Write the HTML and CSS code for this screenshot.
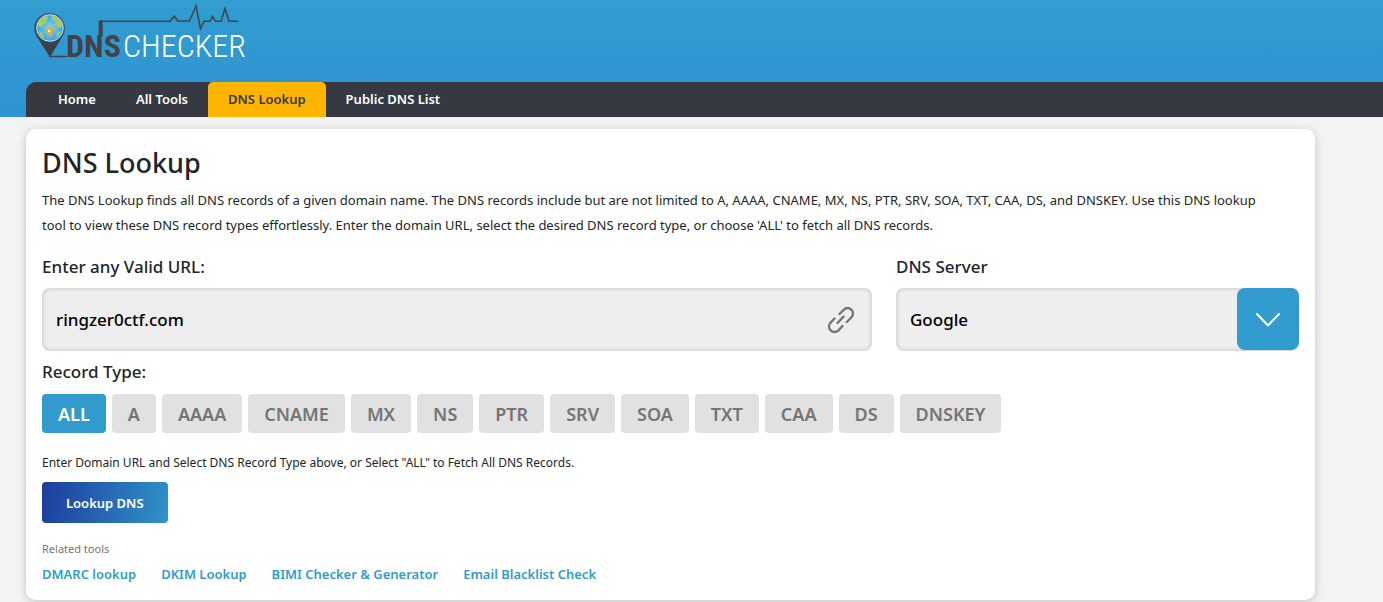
FILE: index.html
```html
<!DOCTYPE html>
<html lang="en">
<head>
<meta charset="utf-8">
<title>DNS Lookup</title>
<link rel="stylesheet" href="styles.css">
</head>
<body>
<header class="site-header">
  <a class="logo" href="#" aria-label="DNS Checker">
    <svg width="220" height="76" viewBox="0 0 220 76">
      <defs>
        <linearGradient id="pin" x1="0" y1="0" x2="0" y2="1">
          <stop offset="0" stop-color="#3c5f7d"/>
          <stop offset="1" stop-color="#34383e"/>
        </linearGradient>
        <radialGradient id="sea">
          <stop offset="0" stop-color="#7fd4ee"/>
          <stop offset="1" stop-color="#37a3dc"/>
        </radialGradient>
      </defs>
      <path d="M15.500 13C7 13 .200 19.500 .200 28c0 4 1.500 7 4 11L16 57l11-18c3-4.500 4-7 4-11C31 19.500 24 13 15.500 13Z" fill="url(#pin)"/>
      <path d="M15 56.500h18" stroke="#414347" stroke-width="1.500" fill="none"/>
      <circle cx="16" cy="28" r="13.300" fill="url(#sea)" stroke="#c5e2ec" stroke-width="1"/>
      <path d="M4 25c0-4 4-8 9-9.500l1 3-2 2 1 2-4 2-2 3-2-1ZM18 16c5 0 9 4 10.500 9l-2 3-3-1-3-2 1-3-4-3ZM5 31l3 1 2 5-1 1c-2-2-4-4-4-7ZM24 32l3-1-3 6-2-1Z" fill="#a7ca64"/>
      <path d="m12 28 3-1 4 1 1 3-2 2-1 4-2-1-1-4-3-2Z" fill="#eda82d"/>
      <circle cx="15" cy="31" r="1.200" fill="#fff"/>
      <path d="M66.500 36V21.300H136l4.500-5.300 3 5h12L162 6l4.500 22.500L170 21.300h6l2.500-5 3 5h5.500L191 8.500l4 12.800h9" fill="none" stroke="#42464b" stroke-width="1.600"/>
      <path d="M64.700 36V20.500h4V36Z" fill="#414347"/>
      <text class="logo-dns" x="32" y="57">DNS</text>
      <text class="logo-checker" x="89" y="57">CHECKER</text>
    </svg>
  </a>
  <nav class="nav">
    <a href="#">Home</a>
    <a href="#">All Tools</a>
    <a class="active" href="#">DNS Lookup</a>
    <a href="#">Public DNS List</a>
  </nav>
</header>
<main class="page">
  <form class="card">
    <h1>DNS Lookup</h1>
    <p class="intro">The DNS Lookup finds all DNS records of a given domain name. The DNS records include but are not limited to A, AAAA, CNAME, MX, NS, PTR, SRV, SOA, TXT, CAA, DS, and DNSKEY. Use this DNS lookup tool to view these DNS record types effortlessly. Enter the domain URL, select the desired DNS record type, or choose 'ALL' to fetch all DNS records.</p>
    <div class="fields">
      <div class="field field-url">
        <label for="url">Enter any Valid URL:</label>
        <div class="box">
          <input id="url" type="text" value="ringzer0ctf.com">
          <svg class="link-icon" width="28" height="28" viewBox="0 0 28 28" fill="none" stroke="#757575" stroke-width="2.400" stroke-linecap="round">
            <path d="M12.500 8l4-4c2.500-2.500 5.500-2.500 7.800-.300s2.200 5.500 0 7.800l-4.500 4.500M7.500 12.500l-3.800 4c-2.200 2.300-2.200 5.500 0 7.800s5.500 2.200 7.800 0l4-4.300M10.500 17l6-6.300"/>
          </svg>
        </div>
      </div>
      <div class="field field-server">
        <label for="server">DNS Server</label>
        <div class="box">
          <select id="server"><option>Google</option></select>
          <span class="arrow"><svg width="26" height="16" viewBox="0 0 26 16" fill="none" stroke="#fff" stroke-width="2" stroke-linecap="round" stroke-linejoin="round"><path d="M2 3l11 11.500L24 3"/></svg></span>
        </div>
      </div>
    </div>
    <h2>Record Type:</h2>
    <div class="types">
      <button type="button" class="on">ALL</button>
      <button type="button">A</button>
      <button type="button">AAAA</button>
      <button type="button">CNAME</button>
      <button type="button">MX</button>
      <button type="button">NS</button>
      <button type="button">PTR</button>
      <button type="button">SRV</button>
      <button type="button">SOA</button>
      <button type="button">TXT</button>
      <button type="button">CAA</button>
      <button type="button">DS</button>
      <button type="button">DNSKEY</button>
    </div>
    <p class="hint">Enter Domain URL and Select DNS Record Type above, or Select "ALL" to Fetch All DNS Records.</p>
    <button type="button" class="submit">Lookup DNS</button>
    <p class="related-title">Related tools</p>
    <div class="related">
      <a href="#">DMARC lookup</a>
      <a href="#">DKIM Lookup</a>
      <a href="#">BIMI Checker &amp; Generator</a>
      <a href="#">Email Blacklist Check</a>
    </div>
  </form>
</main>
</body>
</html>
```
FILE: styles.css
```css
* { box-sizing: border-box; }
body {
  margin: 0;
  background: #f3f3f3;
  color: #212529;
  font-family: "Segoe UI", "Noto Sans", "Open Sans", sans-serif;
}
a { text-decoration: none; }
h1, h2, p { margin: 0; }
.site-header {
  padding-left: 26px;
  background: linear-gradient(#319dd0, #3093d2);
}
.logo { display: flex; height: 82px; padding-left: 8px; }
.logo-dns, .logo-checker { font-family: "Roboto Condensed", "Liberation Sans Narrow", "Liberation Sans", sans-serif; font-size: 32px; }
.logo-dns { font-weight: 700; fill: #414347; }
.logo-checker { font-weight: 300; fill: #fff; }
.nav {
  display: flex;
  padding-left: 12px;
  background: #363941;
  border-top-left-radius: 10px;
}
.nav a {
  padding: 0 20px;
  color: #fff;
  font-size: 13px;
  font-weight: 600;
  line-height: 35px;
}
.nav .active {
  background: #ffb400;
  color: #363941;
  border-radius: 5px 5px 0 0;
}
.page { padding: 12px 68px 2px 26px; }
.card {
  padding: 16px;
  background: #fff;
  border-radius: 10px;
  box-shadow: 0 2px 10px rgba(0, 0, 0, 0.2);
}
h1 { font-size: 27px; font-weight: 500; line-height: 36px; }
.intro { margin-top: 7px; padding-right: 24px; font-size: 13px; line-height: 25px; }
.fields {
  display: grid;
  grid-template-columns: repeat(12, minmax(0, 1fr));
  column-gap: 24px;
  margin-top: 16px;
}
.field-url { grid-column: span 8; }
.field-server { grid-column: span 4; }
.field label, h2 {
  display: block;
  font-size: 17px;
  font-weight: 500;
  line-height: 26px;
}
.box {
  display: flex;
  align-items: center;
  height: 63px;
  margin-top: 8px;
  background: #eee;
  border-radius: 8px;
  box-shadow: inset 0 0 5px rgba(0, 0, 0, 0.2);
}
.box input, .box select {
  flex: 1;
  min-width: 0;
  height: 100%;
  padding: 0 14px;
  border: 0;
  background: transparent;
  appearance: none;
  color: #000;
  font: 500 17px "Segoe UI", "Noto Sans", "Open Sans", sans-serif;
}
.link-icon { margin-right: 17px; }
.arrow {
  display: flex;
  align-items: center;
  justify-content: center;
  align-self: flex-start;
  width: 62px;
  height: 62px;
  background: #319bcd;
  border-radius: 8px;
}
h2 { margin-top: 8px; }
.types { display: flex; flex-wrap: wrap; gap: 6px; margin-top: 9px; }
.types button {
  height: 39px;
  padding: 0 16px;
  border: 0;
  border-radius: 4px;
  background: #e1e1e1;
  color: #757575;
  font: 600 18px "Segoe UI", "Noto Sans", "Open Sans", sans-serif;
}
.types .on { background: #319bcd; color: #fff; }
.hint { margin-top: 20px; font-size: 12px; line-height: 19px; }
.submit {
  display: block;
  height: 41px;
  margin-top: 10px;
  padding: 0 24px;
  border: 0;
  border-radius: 4px;
  background: linear-gradient(100deg, #1d3c9e, #3093c8);
  color: #fff;
  font: 600 13px "Segoe UI", "Noto Sans", "Open Sans", sans-serif;
}
.related-title { margin-top: 17px; color: #757575; font-size: 11px; line-height: 18px; }
.related { display: flex; flex-wrap: wrap; gap: 25px; margin-top: 6px; }
.related a { color: #319bcd; font-size: 13px; font-weight: 600; line-height: 20px; }
```
